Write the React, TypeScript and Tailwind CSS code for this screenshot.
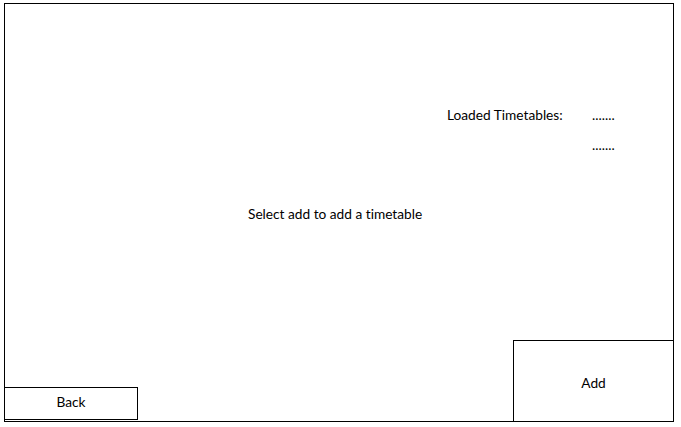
import React from "react";

export default function App() {
  return (
    <div
      className="w-[681px] h-[427px] bg-white pl-[4px] pt-[3px] text-black text-[13.7px] [font-variant-ligatures:none]"
      style={{ fontFamily: "Lato, 'Liberation Sans', sans-serif" }}
    >
      <div className="w-[670px] h-[419px] border border-black flex flex-col">
        <div className="h-[336px] flex flex-col">
          <div className="pt-[101px] pl-[442px] flex leading-[20px]">
            <span className="w-[145px]">Loaded Timetables:</span>
            <span>.......</span>
          </div>
          <div className="mt-[10px] pl-[587px] leading-[20px]">.......</div>
          <div className="mt-[49px] pl-[243px] leading-[20px]">Select add to add a timetable</div>
        </div>
        <div className="flex-1 flex justify-between items-end">
          <div className="w-[133px] h-[33px] border-t border-r border-b border-black mb-[1px] flex items-center justify-center pb-[4px] leading-[20px]">
            Back
          </div>
          <div className="w-[160px] h-full border-t border-l border-black flex items-center justify-center pt-[4px] leading-[20px]">
            Add
          </div>
        </div>
      </div>
    </div>
  );
}
